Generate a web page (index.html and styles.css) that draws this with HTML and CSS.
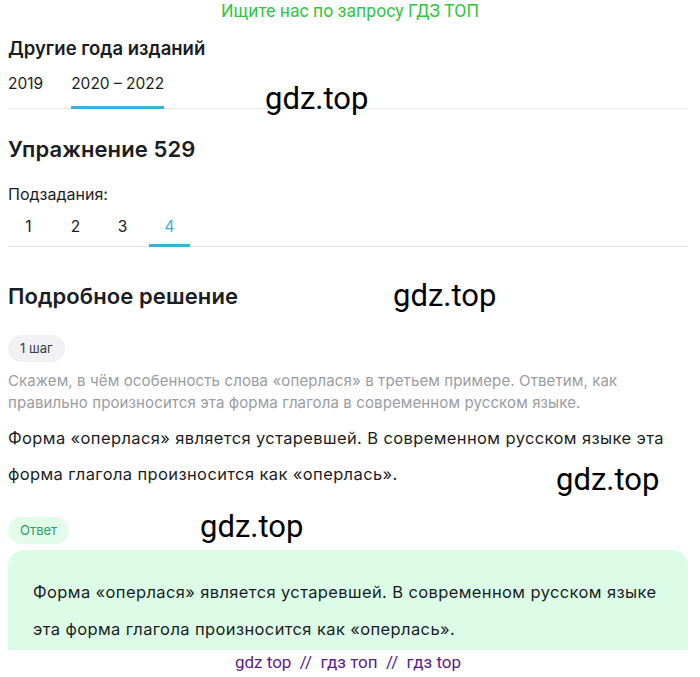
FILE: index.html
```html
<!DOCTYPE html>
<html lang="ru">
<head>
  <meta charset="UTF-8" />
  <meta name="viewport" content="width=device-width, initial-scale=1.0" />
  <title>Упражнение 529 - ГДЗ ТОП</title>
  <link rel="stylesheet" href="styles.css">
</head>
<body>
  <div class="promo">Ищите нас по запросу ГДЗ ТОП</div>

  <div class="page">
    <h2 class="section-title">Другие года изданий</h2>
    <nav class="tabs years">
      <a href="#">2019</a>
      <a href="#" class="active">2020 – 2022</a>
    </nav>

    <h1 class="task-title">Упражнение 529</h1>
    <div class="subtasks-label">Подзадания:</div>
    <nav class="tabs subtasks">
      <a href="#">1</a>
      <a href="#">2</a>
      <a href="#">3</a>
      <a href="#" class="active">4</a>
    </nav>

    <h2 class="solution-title">Подробное решение</h2>
    <span class="pill step">1 шаг</span>
    <p class="hint">Скажем, в чём особенность слова «оперлася» в третьем примере. Ответим, как правильно произносится эта форма глагола в современном русском языке.</p>
    <p class="text">Форма «оперлася» является устаревшей. В современном русском языке эта форма глагола произносится как «оперлась».</p>

    <span class="pill answer-pill">Ответ</span>
    <div class="answer">
      <p>Форма «оперлася» является устаревшей. В современном русском языке эта форма глагола произносится как «оперлась».</p>
    </div>

    <div class="footer-links">gdz top &nbsp;//&nbsp; гдз топ &nbsp;//&nbsp; гдз top</div>
  </div>

  <span class="mark" style="left: 265px; top: 83px;">gdz.top</span>
  <span class="mark" style="left: 393px; top: 280px;">gdz.top</span>
  <span class="mark" style="left: 556px; top: 464px;">gdz.top</span>
  <span class="mark" style="left: 200px; top: 511px;">gdz.top</span>
</body>
</html>
```

FILE: styles.css
```css
body {
  font-family: Inter, 'Noto Sans', sans-serif;
  color: #1a1d24;
  background-color: #fff;
  margin: 0;
  padding: 0;
  position: relative;
}

.promo {
  font-family: Roboto, sans-serif;
  color: #2fc640;
  font-size: 17.6px;
  text-align: center;
  line-height: 22px;
  height: 22px;
}

.page {
  padding: 0 12px 0 8px;
}

.section-title {
  font-size: 18.5px;
  font-weight: 600;
  margin: 14px 0 0;
  line-height: 24px;
}

.tabs {
  display: flex;
  border-bottom: 1px solid #e6e6e6;
}
.tabs a {
  color: #1a1d24;
  text-decoration: none;
  font-size: 15.5px;
  border-bottom: 3px solid transparent;
  margin-bottom: -1px;
}
.tabs a.active {
  border-bottom-color: #3ab0dc;
}

.years {
  margin-top: 11px;
}
.years a {
  padding: 3px 0 12px;
  margin-right: 28px;
  line-height: 20px;
}

.task-title {
  font-size: 22px;
  font-weight: 600;
  letter-spacing: 0.1px;
  margin: 26px 0 0;
  line-height: 28px;
}

.subtasks-label {
  font-size: 16px;
  margin-top: 21px;
  line-height: 20px;
}

.subtasks {
  margin-top: 8px;
}
.subtasks a {
  width: 41px;
  margin-right: 6px;
  text-align: center;
  padding: 5px 0 7px;
  line-height: 20px;
}
.subtasks a.active {
  color: #3ab0dc;
}

.solution-title {
  font-size: 22px;
  font-weight: 600;
  letter-spacing: 0.1px;
  margin: 35px 0 0;
  line-height: 28px;
}

.pill {
  display: inline-block;
  font-size: 13px;
  line-height: 27px;
  padding: 0 12px;
  border-radius: 14px;
}
.step {
  background-color: #f1f1f3;
  color: #3a3d44;
  margin-top: 25px;
}
.answer-pill {
  background-color: #e2fbea;
  color: #29a35a;
  margin-top: 25px;
}

.hint {
  color: #9a9ca2;
  font-size: 15px;
  letter-spacing: 0.12px;
  line-height: 22px;
  margin: 8px 0 0;
}

.text {
  font-size: 16.5px;
  letter-spacing: 0.38px;
  line-height: 36px;
  margin: 6px 0 0;
}

.answer {
  background-color: #dcfce7;
  border-radius: 16px 16px 0 0;
  margin-top: 6px;
  padding: 24px 25px 2px;
}
.answer p {
  font-size: 16.5px;
  letter-spacing: 0.38px;
  line-height: 37px;
  margin: 0;
}

.footer-links {
  font-family: Roboto, sans-serif;
  color: #5b1d8c;
  font-size: 17px;
  text-align: center;
  line-height: 22px;
  margin-top: 1px;
}

.mark {
  position: absolute;
  font-family: Roboto, sans-serif;
  font-size: 31px;
  color: #000;
  line-height: 31px;
}
```
